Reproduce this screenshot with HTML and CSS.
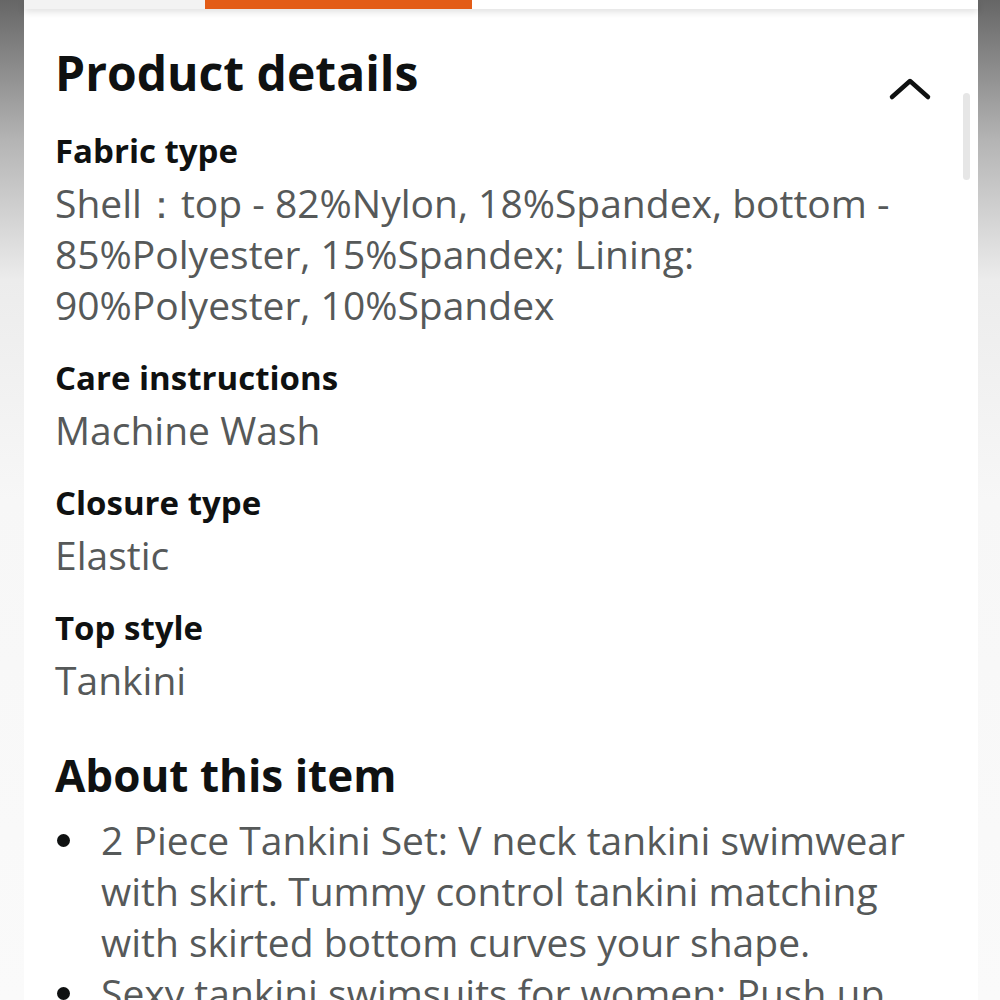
FILE: index.html
```html
<!DOCTYPE html>
<html lang="en">
  <head>
    <meta charset="UTF-8" />
    <meta name="viewport" content="width=device-width, initial-scale=1.0" />
    <title>Product details</title>
    <link rel="stylesheet" href="styles.css">
  </head>
  <body>
    <div class="card">
      <div class="tabs">
        <div class="tab"></div>
        <div class="tab active"></div>
        <div class="tab blank"></div>
      </div>
      <div class="scrollbar"></div>

      <section class="content">
        <div class="section-head">
          <h1>Product details</h1>
          <svg class="chevron" width="44" height="26" viewBox="0 0 44 26">
            <polyline points="4,21 22,5 40,21" fill="none" stroke="#0f1111" stroke-width="4.5" stroke-linecap="round" stroke-linejoin="round" />
          </svg>
        </div>

        <div class="item">
          <div class="item-label">Fabric type</div>
          <div class="item-value">Shell：top - 82%Nylon, 18%Spandex, bottom - 85%Polyester, 15%Spandex; Lining: 90%Polyester, 10%Spandex</div>
        </div>
        <div class="item">
          <div class="item-label">Care instructions</div>
          <div class="item-value">Machine Wash</div>
        </div>
        <div class="item">
          <div class="item-label">Closure type</div>
          <div class="item-value">Elastic</div>
        </div>
        <div class="item">
          <div class="item-label">Top style</div>
          <div class="item-value">Tankini</div>
        </div>

        <h2>About this item</h2>
        <ul class="bullets">
          <li>2 Piece Tankini Set: V neck tankini swimwear with skirt. Tummy control tankini matching with skirted bottom curves your shape.</li>
          <li>Sexy tankini swimsuits for women: Push up padded bra gives you a flattering look and extra support.</li>
        </ul>
      </section>
    </div>
  </body>
</html>
```

FILE: styles.css
```css
body {
  margin: 0;
  height: 1000px;
  overflow: hidden;
  font-family: "Open Sans", "Noto Sans", sans-serif;
  background: linear-gradient(180deg, #666 0%, #b4b4b4 14%, #ececec 28%, #f7f7f7 50%, #fafafa 100%);
}
.card {
  position: relative;
  margin: 0 22px 0 24px;
  min-height: 1000px;
  background-color: #fff;
}
.tabs {
  display: flex;
  height: 9px;
  box-shadow: 0 3px 7px rgba(0, 0, 0, 0.12);
}
.tab {
  width: 181px;
  background-color: #f3f3f3;
}
.tab.active {
  width: 267px;
  background-color: #e35c17;
}
.tab.blank {
  flex: 1;
  background-color: #fff;
}
.scrollbar {
  position: absolute;
  top: 93px;
  right: 8px;
  width: 7px;
  height: 87px;
  border-radius: 4px;
  background-color: #e6e6e6;
}
.content {
  padding: 34px 42px 0 31px;
}
.section-head {
  display: flex;
  justify-content: space-between;
  align-items: flex-start;
}
h1 {
  margin: 0;
  font-size: 48px;
  line-height: 60px;
  font-weight: 700;
  color: #0f1111;
}
.chevron {
  margin-top: 33px;
  margin-right: 4px;
}
.item {
  margin-top: 22px;
}
.item:first-of-type {
  margin-top: 7px;
}
.item-label {
  font-size: 33px;
  line-height: 52px;
  font-weight: 700;
  color: #0f1111;
}
.item-value {
  font-size: 39px;
  line-height: 51px;
  color: #565959;
}
h2 {
  margin: 42px 0 0;
  font-size: 44px;
  line-height: 56px;
  font-weight: 700;
  color: #0f1111;
}
.bullets {
  list-style: none;
  margin: 11px 0 0;
  padding: 0;
}
.bullets li {
  display: flex;
  font-size: 39px;
  line-height: 51px;
  color: #565959;
}
.bullets li::before {
  content: "";
  flex: none;
  width: 13px;
  height: 13px;
  margin: 20px 31px 0 2px;
  border-radius: 50%;
  background-color: #0f1111;
}
```
